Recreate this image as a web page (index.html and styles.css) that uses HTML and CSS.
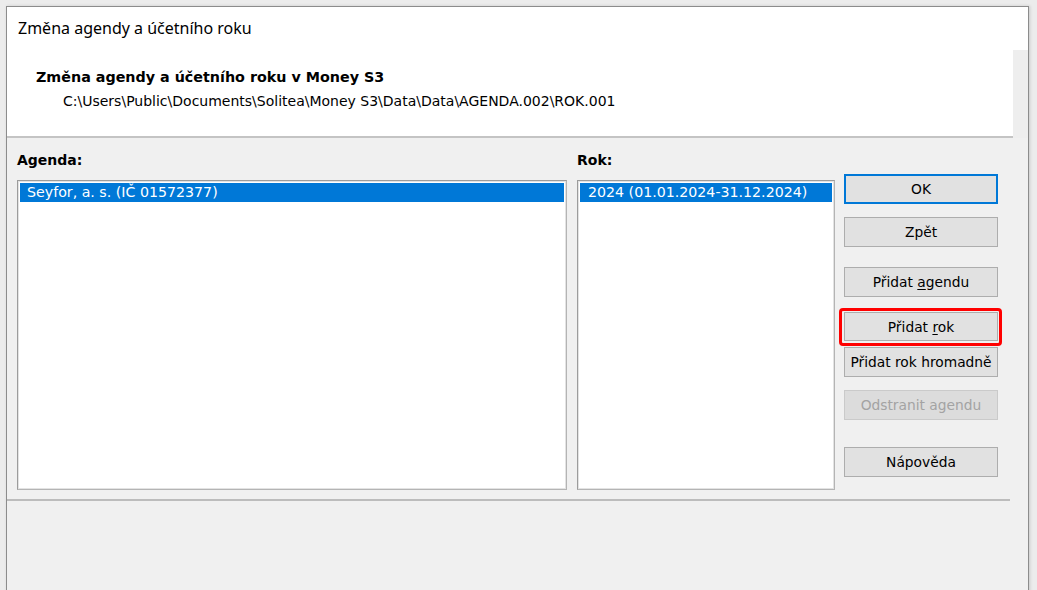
FILE: index.html
```html
<!DOCTYPE html>
<html>
<head>
  <meta charset="UTF-8">
  <title>Změna agendy a účetního roku</title>
  <link rel="stylesheet" href="styles.css">
</head>
<body>
  <div class="window">
    <div class="titlebar">Změna agendy a účetního roku</div>
    <div class="header">
      <div class="header-main">
        <div class="header-title">Změna agendy a účetního roku v Money S3</div>
        <div class="header-path">C:\Users\Public\Documents\Solitea\Money S3\Data\Data\AGENDA.002\ROK.001</div>
      </div>
      <div class="header-side"></div>
    </div>
    <div class="content">
      <div class="col agenda">
        <div class="label">Agenda:</div>
        <div class="list">
          <div class="item selected">Seyfor, a. s. (IČ 01572377)</div>
        </div>
      </div>
      <div class="col rok">
        <div class="label">Rok:</div>
        <div class="list">
          <div class="item selected">2024 (01.01.2024-31.12.2024)</div>
        </div>
      </div>
      <div class="buttons">
        <button class="btn default">OK</button>
        <button class="btn back">Zpět</button>
        <button class="btn">Přidat <u>a</u>gendu</button>
        <div class="highlight">
          <button class="btn">Přidat <u>r</u>ok</button>
        </div>
        <button class="btn bulk">Přidat rok hromadně</button>
        <button class="btn disabled">Odstranit agendu</button>
        <button class="btn help">Nápověda</button>
      </div>
    </div>
    <div class="separator"></div>
  </div>
</body>
</html>
```

FILE: styles.css
```css
body {
  margin: 0;
  background: #ececec;
  font-family: "DejaVu Sans", Verdana, sans-serif;
  font-size: 14px;
  color: #000000;
  overflow: hidden;
}
.window {
  margin: 6px 0 0 6px;
  width: 1021px;
  height: 600px;
  border: 1px solid #8c8c8c;
  border-bottom: none;
  background: #f0f0f0;
  box-shadow: 1px 0 3px rgba(0, 0, 0, 0.15);
}
.titlebar {
  height: 43px;
  background: #ffffff;
  padding-left: 11px;
  font-family: "Noto Sans", "Open Sans", sans-serif;
  font-size: 16px;
  line-height: 43px;
}
.header {
  display: flex;
  height: 88px;
}
.header-main {
  flex: 1;
  background: #ffffff;
  border-bottom: 2px solid #c4c4c4;
  padding: 17px 0 0 29px;
}
.header-side {
  width: 15px;
  background: #eeeeee;
}
.header-title {
  font-weight: bold;
  font-size: 14.3px;
  line-height: 20px;
}
.header-path {
  margin-top: 4px;
  padding-left: 27px;
  line-height: 20px;
}
.content {
  display: flex;
  align-items: flex-start;
  padding: 13px 0 0 10px;
}
.col {
  display: flex;
  flex-direction: column;
}
.agenda {
  width: 550px;
  margin-right: 10px;
}
.rok {
  width: 258px;
  margin-right: 9px;
}
.label {
  font-weight: bold;
  font-size: 14px;
  line-height: 18px;
  height: 29px;
}
.list {
  box-sizing: border-box;
  height: 310px;
  background: #ffffff;
  border: 1px solid #9c9c9c;
  border-right-color: #b4b4b4;
  border-bottom-color: #b4b4b4;
  box-shadow: inset 0 0 0 1px #e3e3e3;
  padding: 2px;
}
.item {
  height: 19px;
  line-height: 19px;
  padding-left: 7px;
  font-size: 14.2px;
}
.rok .item {
  padding-left: 8px;
}
.selected {
  background: #0078d7;
  color: #ffffff;
}
.buttons {
  display: flex;
  flex-direction: column;
  width: 154px;
  padding-top: 23px;
}
.btn {
  box-sizing: border-box;
  font-family: "DejaVu Sans", Verdana, sans-serif;
  font-size: 13.8px;
  height: 30px;
  width: 154px;
  padding: 0;
  background: #e1e1e1;
  border: 1px solid #adadad;
  color: #000000;
  margin-bottom: 20px;
}
.btn u {
  text-decoration-thickness: 1px;
  text-underline-offset: 2px;
}
.default {
  border: 2px solid #0078d7;
  margin-bottom: 13px;
}
.back {
  margin-bottom: 20px;
}
.highlight {
  box-sizing: border-box;
  margin: -9px 0 1px -5px;
  padding: 1px 1px 2px 2px;
  border: 3px solid #ff0000;
  border-radius: 4px;
  width: 163px;
}
.highlight .btn {
  margin: 0;
  height: 29px;
}
.bulk {
  margin-bottom: 13px;
}
.disabled {
  color: #a3a3a3;
  background: #dcdcdc;
  border-color: #cacaca;
  margin-bottom: 27px;
}
.help {
  margin-bottom: 0;
}
.separator {
  margin-top: 9px;
  width: 1003px;
  border-top: 2px solid #bcbcbc;
}
```
